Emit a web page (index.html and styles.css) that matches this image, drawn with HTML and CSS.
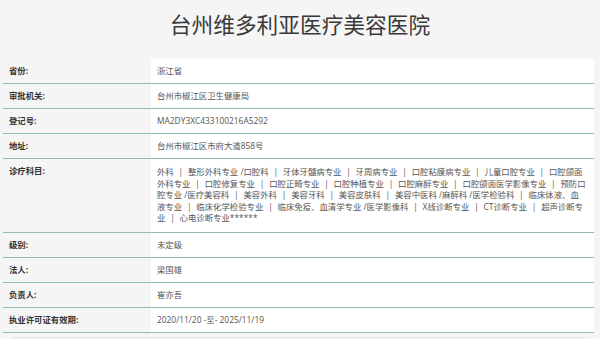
FILE: index.html
```html
<!DOCTYPE html>
<html lang="zh-CN">
<head>
<meta charset="utf-8">
<title>台州维多利亚医疗美容医院</title>
<link rel="stylesheet" href="styles.css">
</head>
<body>
<h1 class="title">台州维多利亚医疗美容医院</h1>
<div class="info">
  <div class="row"><div class="label">省份:</div><div class="value">浙江省</div></div>
  <div class="row"><div class="label">审批机关:</div><div class="value">台州市椒江区卫生健康局</div></div>
  <div class="row"><div class="label">登记号:</div><div class="value">MA2DY3XC433100216A5292</div></div>
  <div class="row"><div class="label">地址:</div><div class="value">台州市椒江区市府大道858号</div></div>
  <div class="row tall"><div class="label">诊疗科目:</div><div class="value multi">外科<span class="sep">|</span>整形外科专业 /口腔科<span class="sep">|</span>牙体牙髓病专业<span class="sep">|</span>牙周病专业<span class="sep">|</span>口腔粘膜病专业<span class="sep">|</span>儿童口腔专业<span class="sep">|</span>口腔颌面外科专业<span class="sep">|</span>口腔修复专业<span class="sep">|</span>口腔正畸专业<span class="sep">|</span>口腔种植专业<span class="sep">|</span>口腔麻醉专业<span class="sep">|</span>口腔颌面医学影像专业<span class="sep">|</span>预防口腔专业 /医疗美容科<span class="sep">|</span>美容外科<span class="sep">|</span>美容牙科<span class="sep">|</span>美容皮肤科<span class="sep">|</span>美容中医科 /麻醉科 /医学检验科<span class="sep">|</span>临床体液、血液专业<span class="sep">|</span>临床化学检验专业<span class="sep">|</span>临床免疫、血清学专业 /医学影像科<span class="sep">|</span>X线诊断专业<span class="sep">|</span>CT诊断专业<span class="sep">|</span>超声诊断专业<span class="sep">|</span>心电诊断专业******</div></div>
  <div class="row"><div class="label">级别:</div><div class="value">未定级</div></div>
  <div class="row"><div class="label">法人:</div><div class="value">梁国雄</div></div>
  <div class="row"><div class="label">负责人:</div><div class="value">崔亦吾</div></div>
  <div class="row"><div class="label">执业许可证有效期:</div><div class="value">2020/11/20 -至- 2025/11/19</div></div>
</div>
<div class="next"></div>
</body>
</html>
```

FILE: styles.css
```css
html, body {
  margin: 0;
  padding: 0;
  background: #f5f5f5;
  font-family: "Open Sans", "Noto Sans CJK SC", sans-serif;
}
.title {
  margin: 0;
  height: 59px;
  line-height: 47px;
  text-align: center;
  font-family: "Noto Sans CJK SC", sans-serif;
  font-weight: 400;
  font-size: 21.7px;
  color: #3a3a3a;
}
.info {
  margin: 0 6px 0 3px;
}
.row {
  display: grid;
  grid-template-columns: 148px 1fr;
  border-bottom: 1px solid #8fbfa7;
}
.label {
  padding: 0 6px;
  line-height: 24px;
  font-size: 8.4px;
  font-weight: 700;
  color: #333;
}
.value {
  background: #fff;
  padding: 0 6px;
  line-height: 24px;
  font-size: 8.4px;
  color: #555;
}
.value.multi {
  padding: 7px 7px 8px 6px;
  line-height: 11.6px;
}
.sep {
  margin: 0 4.8px;
}
.next {
  margin: 4px 15px 0 13px;
  height: 6px;
  background: #ebebeb;
}
```
